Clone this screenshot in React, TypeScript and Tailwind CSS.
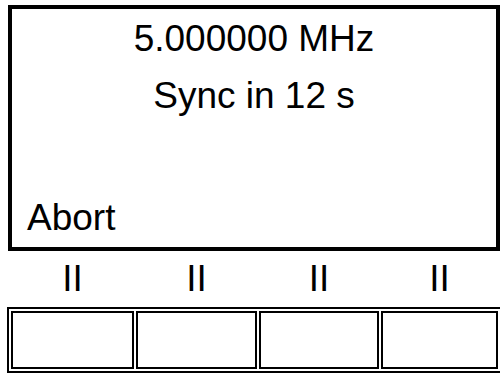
export default function App() {
  const cols = "grid grid-cols-[123px_121px_120px_117px] gap-[2px]";
  return (
    <div
      className="w-[500px] h-[373px] overflow-hidden bg-white text-black"
      style={{ fontFamily: '"Liberation Sans", Arial, sans-serif' }}
    >
      <div className="ml-[8px] mt-[5px] w-[492px] h-[246px] border-4 border-black flex flex-col">
        <div className="pt-[1px] text-center text-[37px] leading-[57px]">5.000000 MHz</div>
        <div className="text-center text-[37px] leading-[57px]">Sync in 12 s</div>
        <div className="mt-auto pb-[1px] pl-[15px] text-[37px] leading-[57px]">Abort</div>
      </div>
      <div className={`${cols} ml-[11px] mt-[8px] text-[37px] leading-[40px]`}>
        <div className="text-center">II</div>
        <div className="text-center">II</div>
        <div className="text-center">II</div>
        <div className="text-center">II</div>
      </div>
      <div className="ml-[7px] mt-[8px] w-[497px] border-2 border-black p-[2px]">
        <div className={cols}>
          <div className="h-[58px] border-2 border-black" />
          <div className="h-[58px] border-2 border-black" />
          <div className="h-[58px] border-2 border-black" />
          <div className="h-[58px] border-2 border-black" />
        </div>
      </div>
    </div>
  );
}
